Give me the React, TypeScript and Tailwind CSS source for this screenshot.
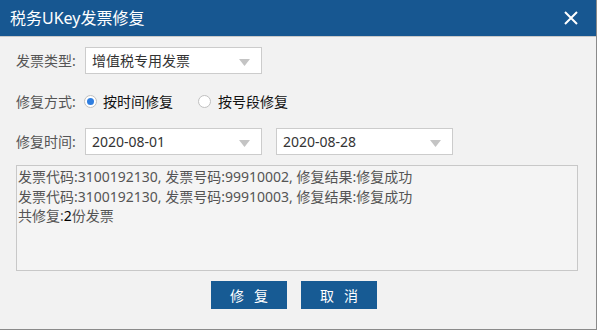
import React from "react";

const font = { fontFamily: '"Noto Sans", "Noto Sans CJK SC", sans-serif' };

function Select({ value, w }: { value: string; w: string }) {
  return (
    <div className={`relative h-[27px] ${w} border border-[#cccccc] bg-white flex items-center pl-[6px] text-[14px] text-[#333]`}>
      <span>{value}</span>
      <svg className="absolute right-[11px] top-[11px]" width="11" height="7" viewBox="0 0 11 7">
        <path d="M0 0 L11 0 L5.5 7 Z" fill="#c4c4c4" />
      </svg>
    </div>
  );
}

function Radio({ checked }: { checked: boolean }) {
  return (
    <div className="w-[13px] h-[13px] rounded-full border border-[#c0c0c0] bg-white flex items-center justify-center">
      {checked && <div className="w-[7px] h-[7px] rounded-full bg-[#2f7ee0]" />}
    </div>
  );
}

export default function App() {
  return (
    <div className="w-[597px] h-[330px] bg-[#8a8a8a]" style={font}>
      <div className="w-[596px] h-[329px] bg-[#f2f2f2] flex flex-col">
        <div className="h-[36px] bg-[#175791] flex items-center justify-between pl-[10px] pr-[18px] border-b border-[#c9c9c9] box-content">
          <span className="text-white text-[16px]">税务UKey发票修复</span>
          <svg width="14" height="14" viewBox="0 0 14 14">
            <path d="M1 1 L13 13 M13 1 L1 13" stroke="white" strokeWidth="2" />
          </svg>
        </div>
        <div className="flex flex-col pl-[16px] pr-[18px] pt-[10px]">
          <div className="flex items-center h-[27px]">
            <span className="w-[69px] text-[14px] text-[#555]">发票类型:</span>
            <Select value="增值税专用发票" w="w-[177px]" />
          </div>
          <div className="flex items-center h-[26px] mt-[14px] text-[14px]">
            <span className="w-[68px] text-[#555]">修复方式:</span>
            <Radio checked />
            <span className="ml-[6px] text-[#111]">按时间修复</span>
            <span className="ml-[25px]"><Radio checked={false} /></span>
            <span className="ml-[7px] text-[#111]">按号段修复</span>
          </div>
          <div className="flex items-center h-[27px] mt-[14px]">
            <span className="w-[69px] text-[14px] text-[#555]">修复时间:</span>
            <Select value="2020-08-01" w="w-[177px]" />
            <div className="ml-[14px]">
              <Select value="2020-08-28" w="w-[177px]" />
            </div>
          </div>
          <div className="mt-[10px] w-[562px] h-[106px] border border-[#c8c8c8] bg-[#f4f4f4] text-[14px] text-[#555] leading-[19.5px] pt-[1px] pl-[1px]">
            <div>发票代码:3100192130, 发票号码:99910002, 修复结果:修复成功</div>
            <div>发票代码:3100192130, 发票号码:99910003, 修复结果:修复成功</div>
            <div>共修复:<span className="text-black">2</span>份发票</div>
          </div>
          <div className="flex justify-center gap-[14px] mt-[10px] pr-[6px]">
            <button className="w-[76px] h-[28px] bg-[#175b94] text-white text-[14px] tracking-[10px] pl-[10px]">修复</button>
            <button className="w-[76px] h-[28px] bg-[#175b94] text-white text-[14px] tracking-[10px] pl-[10px]">取消</button>
          </div>
        </div>
      </div>
    </div>
  );
}
